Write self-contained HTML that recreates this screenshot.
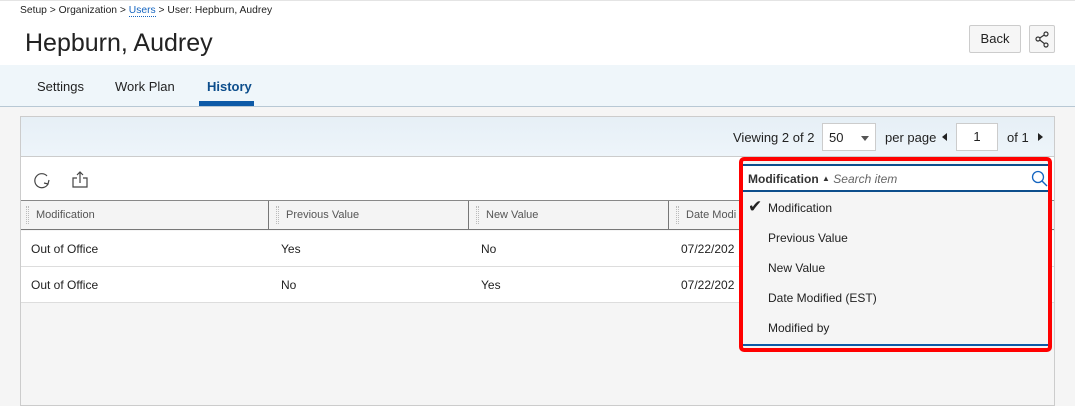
<!DOCTYPE html><html><head><style>
*{box-sizing:border-box;margin:0;padding:0}
body{width:1075px;height:403px;overflow:hidden;background:#f5f5f5;font-family:"Liberation Sans",sans-serif;color:#222;position:relative;font-size:12px}
.a{position:absolute}
.g{position:absolute;top:206px;width:3px;height:18px;border-left:1px dotted #bbb;border-right:1px dotted #bbb}
</style></head><body>
<div class="a" style="left:0;top:0;width:1075px;height:65px;background:#fff;border-top:1px solid #e4e4e4"></div>
<div class="a" style="left:20px;top:5px;font-size:10.3px;color:#222">Setup &gt; Organization &gt; <span style="color:#1565c0;border-bottom:1px dotted #1565c0">Users</span> &gt; User: Hepburn, Audrey</div>
<div class="a" style="left:25px;top:29px;font-size:25px;color:#222">Hepburn, Audrey</div>
<div class="a" style="left:969px;top:25px;width:52px;height:28px;border:1px solid #ccc;border-radius:2px;background:#f6f6f6;font-size:13px;text-align:center;line-height:26px">Back</div>
<div class="a" style="left:1029px;top:25px;width:26px;height:28px;border:1px solid #ccc;border-radius:2px;background:#f6f6f6">
<svg width="24" height="26" viewBox="0 0 24 26"><g fill="none" stroke="#333" stroke-width="1.2"><circle cx="16" cy="8" r="2"/><circle cx="8" cy="13" r="2"/><circle cx="16" cy="19" r="2"/><path d="M9.8 12l4.4-3M9.8 14l4.4 3.5"/></g></svg></div>
<div class="a" style="left:0;top:65px;width:1075px;height:42px;background:#eff6fa;border-bottom:1px solid #b8c8d4"></div>
<div class="a" style="left:37px;top:79px;font-size:13px">Settings</div>
<div class="a" style="left:115px;top:79px;font-size:13px">Work Plan</div>
<div class="a" style="left:207px;top:79px;font-size:13px;color:#0d4e8c;font-weight:bold">History</div>
<div class="a" style="left:199px;top:101px;width:55px;height:5px;background:#0d5aa7"></div>
<div class="a" style="left:20px;top:116px;width:1035px;height:290px;border:1px solid #ccc;background:#f5f5f5"></div>
<div class="a" style="left:21px;top:117px;width:1033px;height:40px;background:linear-gradient(#e6eff6,#eef5fa);border-bottom:1px solid #ccc"></div>
<div class="a" style="left:733px;top:130px;font-size:13px">Viewing 2 of 2</div>
<div class="a" style="left:822px;top:123px;width:54px;height:28px;background:#fff;border:1px solid #ccc;font-size:13px;padding:6px 6px">50<span style="position:absolute;right:6px;top:12px;border:4px solid transparent;border-top:5px solid #555"></span></div>
<div class="a" style="left:885px;top:130px;font-size:13px">per page</div>
<div class="a" style="left:942px;top:133px;border:4px solid transparent;border-right:5px solid #222;border-left:0"></div>
<div class="a" style="left:956px;top:123px;width:42px;height:28px;background:#fff;border:1px solid #ccc;font-size:13px;text-align:center;line-height:26px">1</div>
<div class="a" style="left:1007px;top:130px;font-size:13px">of 1</div>
<div class="a" style="left:1038px;top:133px;border:4px solid transparent;border-left:5px solid #222;border-right:0"></div>
<div class="a" style="left:21px;top:157px;width:1033px;height:44px;background:#fff;border-bottom:1px solid #888"></div>
<svg class="a" style="left:32px;top:171px" width="20" height="20" viewBox="0 0 20 20"><path d="M15 5A7 7 0 1 0 16 13" fill="none" stroke="#444" stroke-width="1.2"/><path d="M12 12l4 1 1-4" fill="none" stroke="#444" stroke-width="1.2"/></svg>
<svg class="a" style="left:70px;top:170px" width="20" height="20" viewBox="0 0 20 20"><path d="M7 8H3v9h14V8h-4M10 13V2M7 5l3-3 3 3" fill="none" stroke="#444" stroke-width="1.2"/></svg>
<div class="a" style="left:21px;top:201px;width:1033px;height:29px;background:#f4f4f4;border-bottom:1px solid #777"></div>
<div class="g" style="left:26px"></div><div class="g" style="left:276px"></div><div class="g" style="left:476px"></div><div class="g" style="left:676px"></div>
<div class="a" style="left:36px;top:209px;font-size:11px;color:#555">Modification</div>
<div class="a" style="left:286px;top:209px;font-size:11px;color:#555">Previous Value</div>
<div class="a" style="left:486px;top:209px;font-size:11px;color:#555">New Value</div>
<div class="a" style="left:686px;top:209px;font-size:11px;color:#555">Date Modi</div>
<div class="a" style="left:268px;top:201px;width:1px;height:29px;background:#777"></div>
<div class="a" style="left:468px;top:201px;width:1px;height:29px;background:#777"></div>
<div class="a" style="left:668px;top:201px;width:1px;height:29px;background:#777"></div>
<div class="a" style="left:21px;top:231px;width:1033px;height:36px;background:#fff;border-bottom:1px solid #ddd"></div>
<div class="a" style="left:21px;top:267px;width:1033px;height:36px;background:#fff;border-bottom:1px solid #ddd"></div>
<div class="a" style="left:31px;top:242px;font-size:12px">Out of Office</div>
<div class="a" style="left:281px;top:242px;font-size:12px">Yes</div>
<div class="a" style="left:481px;top:242px;font-size:12px">No</div>
<div class="a" style="left:681px;top:242px;font-size:12px">07/22/202</div>
<div class="a" style="left:31px;top:278px;font-size:12px">Out of Office</div>
<div class="a" style="left:281px;top:278px;font-size:12px">No</div>
<div class="a" style="left:481px;top:278px;font-size:12px">Yes</div>
<div class="a" style="left:681px;top:278px;font-size:12px">07/22/202</div>
<div class="a" style="left:739px;top:157px;width:313px;height:195px;border:4px solid #f00;border-radius:5px;background:#f5f5f5;overflow:hidden">
<div style="position:absolute;left:0;top:3px;width:305px;height:28px;background:#fff;border-top:2px solid #0d4e8c;border-bottom:2px solid #0d4e8c"></div>
<div style="position:absolute;left:5px;top:11px;font-size:12px;font-weight:bold;color:#333">Modification <span style="font-size:8px;vertical-align:2px">&#9650;</span> <span style="font-weight:normal;font-style:italic;color:#666;font-size:12px">Search item</span></div>
<svg style="position:absolute;left:288px;top:9px" width="18" height="18" viewBox="0 0 18 18"><circle cx="7" cy="7" r="5.5" fill="none" stroke="#1565c0" stroke-width="1.3"/><path d="M11 11l5 5" stroke="#1565c0" stroke-width="1.4"/></svg>
<div style="position:absolute;left:5px;top:36px;font-size:17px">&#10004;</div>
<div style="position:absolute;left:25px;top:40px;font-size:12px">Modification</div>
<div style="position:absolute;left:25px;top:70px;font-size:12px">Previous Value</div>
<div style="position:absolute;left:25px;top:100px;font-size:12px">New Value</div>
<div style="position:absolute;left:25px;top:130px;font-size:12px">Date Modified (EST)</div>
<div style="position:absolute;left:25px;top:160px;font-size:12px">Modified by</div>
<div style="position:absolute;left:0;top:183px;width:305px;height:2px;background:#0d5aa7"></div>
</div>
</body></html>
